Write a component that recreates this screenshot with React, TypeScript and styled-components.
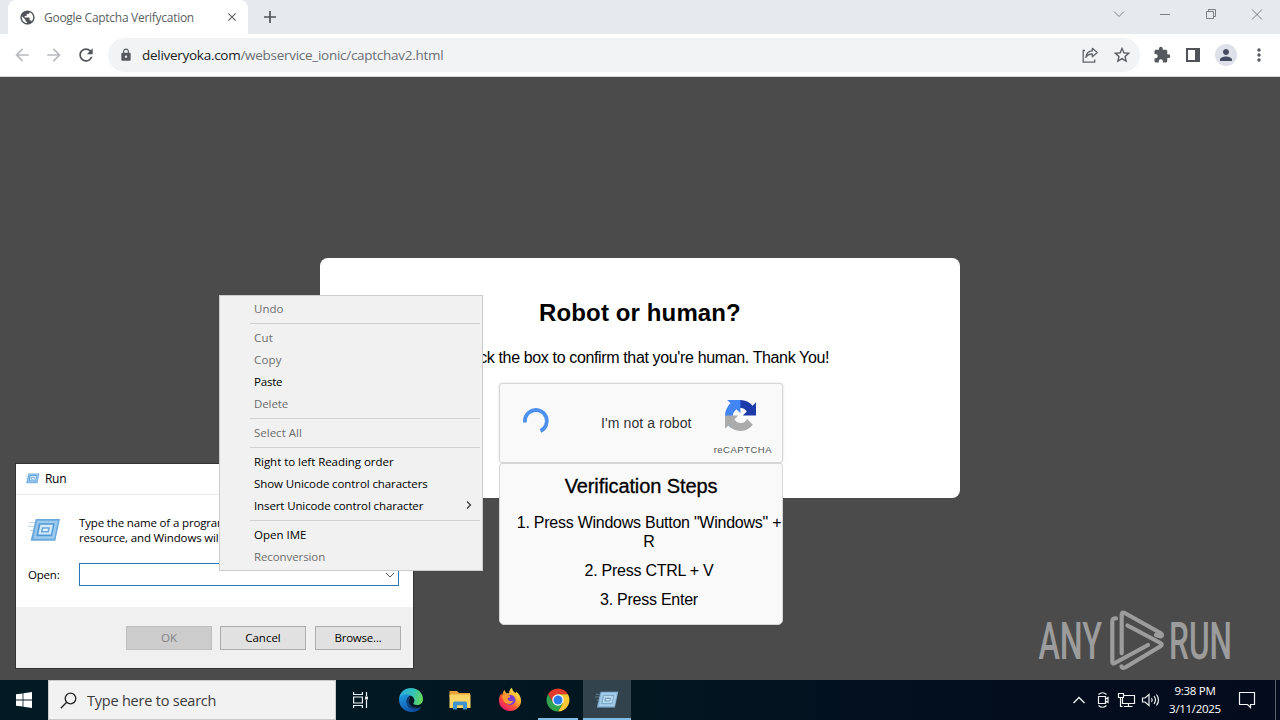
import * as React from 'react'
import styled, {createGlobalStyle} from 'styled-components'
import {
  MdArrowBack,
  MdArrowForward,
  MdClose,
  MdExtension,
  MdLock,
  MdMoreVert,
  MdPerson,
  MdPublic,
  MdRefresh,
  MdStarBorder,
} from 'react-icons/md'

const segoe = `'Open Sans', 'Noto Sans', sans-serif`
const arial = `'Liberation Sans', Arial, sans-serif`

const GlobalStyle = createGlobalStyle`
  * {
    box-sizing: border-box;
  }

  body {
    margin: 0;
    overflow: hidden;
  }
`

interface TextProps {
  $size: number
  $spacing?: number
  $color?: string
}

const Text = styled.span<TextProps>`
  font-size: ${p => p.$size}px;
  letter-spacing: ${p => p.$spacing || 0}px;
  color: ${p => p.$color || '#000'};
  white-space: nowrap;
`

const Desktop = styled.div`
  position: relative;
  display: flex;
  flex-direction: column;
  width: 1280px;
  height: 720px;
  overflow: hidden;
  background: #4b4b4b;
  font-family: ${segoe};
`

/* Browser chrome */

const TabStrip = styled.div`
  display: flex;
  height: 34px;
  padding-left: 8px;
  background: #e7eaed;
`

const Tab = styled.div`
  display: flex;
  align-items: center;
  width: 240px;
  height: 34px;
  padding: 0 9px 0 11px;
  border-radius: 8px 8px 0 0;
  background: #fff;
  color: #5f6368;

  > span {
    flex: 1;
    margin-left: 8px;
  }
`

const NewTab = styled.div`
  display: flex;
  flex: 1;
  align-items: center;
  padding-left: 15px;
`

const WindowButtons = styled.div`
  display: flex;
  height: 29px;

  svg {
    width: 46px;
    height: 29px;
    fill: none;
    stroke: #7b7f83;
    stroke-width: 1;
  }
`

const Toolbar = styled.div`
  display: flex;
  align-items: center;
  height: 43px;
  padding: 0 11px 1px 11px;
  border-bottom: 1px solid #d5d7da;
  background: #fff;
  color: #55595e;
`

const NavButtons = styled.div`
  display: flex;
  flex-shrink: 0;
  gap: 10px;
  width: 97px;
`

const NavIcon = styled.span<{$disabled?: boolean}>`
  display: flex;
  width: 22px;
  justify-content: center;
  font-size: 20px;
  color: ${p => p.$disabled ? '#b9bbbe' : '#505459'};
`

const AddressBar = styled.div`
  display: flex;
  flex-shrink: 0;
  align-items: center;
  width: 1032px;
  height: 34px;
  padding: 0 8px 0 11px;
  border-radius: 17px;
  background: #f1f3f4;
`

const Url = styled.div`
  flex: 1;
  margin-left: 9px;
  line-height: 20px;
`

const AddressIcons = styled.div`
  display: flex;
  gap: 12px;
`

const ToolbarIcons = styled.div`
  display: flex;
  flex: 1;
  align-items: center;
  justify-content: space-between;
  padding-left: 13px;
  font-size: 18px;
`

const Avatar = styled.div`
  display: flex;
  align-items: center;
  justify-content: center;
  width: 22px;
  height: 22px;
  border-radius: 50%;
  background: #dfe1ea;
  color: #474b62;
`

/* Web page */

const Page = styled.main`
  display: flex;
  flex: 1;
  align-items: center;
  justify-content: center;
  padding-bottom: 1px;
  background: #4b4b4b;
  font-family: ${arial};
`

const Card = styled.section`
  display: flex;
  flex-direction: column;
  align-items: center;
  width: 640px;
  height: 240px;
  padding-top: 41px;
  border-radius: 8px;
  background: #fff;
`

const Title = styled.h2`
  margin: 0;
  font-size: 24px;
  font-weight: 700;
  line-height: 28px;
  letter-spacing: 0.12px;
`

const Lead = styled.p`
  margin: 22px 0 16px;
  font-size: 16px;
  line-height: 18px;
  letter-spacing: -0.36px;
  white-space: nowrap;
`

const Captcha = styled.div`
  display: flex;
  flex-shrink: 0;
  align-items: center;
  width: 284px;
  height: 80px;
  margin-left: 2px;
  padding: 0 10px 0 22px;
  border: 1px solid #d6d6d6;
  border-radius: 3px;
  background: #f9f9f9;
  box-shadow: 0 0 3px rgba(0, 0, 0, 0.12);
`

const Spinner = styled.svg`
  margin-bottom: 5px;
`

const CaptchaLabel = styled.div`
  width: 91px;
  margin-left: 51px;
  font-size: 14px;
  line-height: 20px;
  letter-spacing: 0.1px;
  color: #333;
  white-space: nowrap;
`

const CaptchaBrand = styled.div`
  display: flex;
  flex: 1;
  flex-direction: column;
  align-items: flex-end;
  height: 62px;
  padding-top: 8px;

  svg {
    flex-shrink: 0;
    margin-right: 16px;
  }
`

const BrandName = styled.div`
  margin-top: 12px;
  font-size: 9.5px;
  line-height: 14px;
  letter-spacing: 0.5px;
  color: #555;
`

const Steps = styled.div`
  flex-shrink: 0;
  width: 284px;
  height: 162px;
  margin-left: 2px;
  padding-top: 10px;
  border: 1px solid #d6d6d6;
  border-radius: 3px 3px 5px 5px;
  background: #f9f9f9;
  text-align: center;
`

const StepsTitle = styled.div`
  font-size: 20px;
  line-height: 24px;
  letter-spacing: -0.1px;
  -webkit-text-stroke: 0.3px #000;
`

const StepList = styled.ol`
  margin: 15px 0 0;
  padding: 0 0 0 16px;
  list-style: none;
`

const Step = styled.li`
  margin-bottom: 10px;
  font-size: 16px;
  line-height: 19px;
  letter-spacing: -0.25px;
`

/* Run dialog */

const RunDialog = styled.div`
  position: absolute;
  left: 15px;
  top: 463px;
  width: 399px;
  height: 206px;
  border: 1px solid #333;
  background: #fff;
`

const RunTitle = styled.div`
  display: flex;
  align-items: center;
  gap: 5px;
  height: 31px;
  padding: 0 0 1px 9px;
  border-bottom: 1px solid #ececec;
`

const RunBody = styled.div`
  height: 112px;
  padding: 20px 14px 0 12px;
`

const RunPrompt = styled.div`
  display: flex;
  gap: 18px;
  height: 48px;

  > svg {
    margin: 3px 0 0;
  }
`

const PromptText = styled.div`
  display: flex;
  flex-direction: column;
  line-height: 15px;
`

const OpenRow = styled.label`
  display: flex;
  align-items: center;
  height: 23px;
`

const OpenLabel = styled.div`
  width: 51px;
  padding-bottom: 2px;
  line-height: 20px;
`

const ComboBox = styled.div`
  display: flex;
  flex: 1;
  align-items: center;
  justify-content: flex-end;
  height: 23px;
  padding-right: 3px;
  border: 1px solid #2a76b9;
  background: #fff;
`

const RunFooter = styled.div`
  display: flex;
  justify-content: flex-end;
  height: 61px;
  padding: 19px 12px 0 0;
  background: #f0f0f0;
`

const DialogButton = styled.div<{$disabled?: boolean, $gap?: number}>`
  display: flex;
  align-items: center;
  justify-content: center;
  width: 86px;
  height: 24px;
  margin-left: ${p => p.$gap || 0}px;
  padding-bottom: 2px;
  border: 1px solid ${p => p.$disabled ? '#bfbfbf' : '#adadad'};
  background: ${p => p.$disabled ? '#cccccc' : '#e1e1e1'};
`

/* Edit menu */

const Menu = styled.div`
  position: absolute;
  left: 219px;
  top: 295px;
  width: 264px;
  height: 276px;
  padding: 2px;
  border: 1px solid #ccc;
  background: #f1f1f1;
`

const MenuItem = styled.div`
  display: flex;
  align-items: center;
  justify-content: space-between;
  height: 22px;
  padding: 0 8px 2px 32px;
`

const MenuDivider = styled.div`
  height: 7px;
  padding: 3px 0 0 28px;

  &::after {
    content: '';
    display: block;
    height: 1px;
    background: #d0d0d0;
  }
`

/* Taskbar */

const TaskbarRoot = styled.footer`
  display: flex;
  height: 40px;
  background: linear-gradient(90deg, #011a24 0%, #021620 50%, #030e1f 75%, #040b1c 100%);
`

const StartButton = styled.div`
  display: flex;
  align-items: center;
  justify-content: center;
  width: 48px;
`

const SearchBox = styled.div`
  display: flex;
  align-items: center;
  width: 288px;
  gap: 10px;
  padding-left: 11px;
  border: 1px solid #c9c9c9;
  background: #f2f2f2;
`

const TaskButton = styled.div<{$running?: boolean, $active?: boolean, $width?: number}>`
  display: flex;
  align-items: center;
  justify-content: center;
  width: ${p => p.$width || 48}px;
  padding-top: 1px;
  border-bottom: 2px solid ${p => p.$running ? '#7fbce8' : 'transparent'};
  background: ${p => p.$active ? '#33434d' : 'transparent'};
`

const ActiveButton = styled(TaskButton)`
  margin-left: 5px;
`

const Tray = styled.div`
  display: flex;
  flex: 1;
  align-items: center;
  justify-content: flex-end;

  > svg {
    flex-shrink: 0;
    fill: none;
    stroke: #f0f2f4;
    stroke-width: 1.2;
  }
`

const Clock = styled.div`
  display: flex;
  flex-direction: column;
  align-items: center;
  width: 56px;
  line-height: 18px;
`

const ShowDesktop = styled.div`
  width: 5px;
  height: 40px;
  margin-left: 19px;
  border-left: 1px solid #5c626c;
`

const Watermark = styled.svg`
  position: absolute;
  left: 1034px;
  top: 606px;
`

const ShareIcon = () => (
  <svg width='20' height='20' viewBox='0 0 20 20' fill='none' stroke='#5f6368' strokeWidth='1.3'>
    <path d='M5 5.500H3.200v11.700h11.500V14.500' />
    <path d='M12.300 3.300l5 4.200-5 4.200V9c-3 0-5.200 1-6.500 3.400.4-3.800 2.500-6.200 6.500-6.500z' strokeLinejoin='round' />
  </svg>
)

const SidePanelIcon = () => (
  <svg width='20' height='20' viewBox='0 0 20 20'>
    <path d='M3 3h14v14H3z' fill='#4f5358' />
    <path d='M5 5h7v10H5z' fill='#fff' />
  </svg>
)

const RunIcon = ({size, dim}: {size: number, dim?: boolean}) => (
  <svg width={size} height={size * 0.72} viewBox='0 0 32 23'>
    <path d='M1 4.500h8M0 8h7M2 12h5' stroke={dim ? '#6e8ea5' : '#b5d3ea'} strokeWidth='1' />
    <path d='M7.500 1H31l-4.500 21H2.500z' fill={dim ? '#87b4d6' : '#6ba9dc'} />
    <path d='M9 2.600h20l-3.700 17.500H5.300z' fill={dim ? '#a9cee8' : '#9dcbf0'} />
    <path d='M10.500 5h15.500l-2.700 12.600H7.900z' fill={dim ? '#7ba9cc' : '#5298d2'} />
    <path d='M12 6.500h12.200l-2 9.500H10z' fill={dim ? '#b9d9ee' : '#d3eafa'} />
    <path d='M13.500 9h7.800l-1.100 5h-7.800z' fill={dim ? '#6f9dc2' : '#6ba6d8'} />
    <path d='M14.800 10.500h4.700l-.5 2.200h-4.700z' fill={dim ? '#cfe5f4' : '#e6f4fd'} />
  </svg>
)

const RecaptchaLogo = () => (
  <svg width='31' height='31' viewBox='0 0 64 64'>
    <path fill='#1c3aa9' d='M64 31.955l-.033-1.370V4.687l-7.160 7.160C50.948 4.674 42.033.093 32.050.093c-10.400 0-19.622 4.960-25.458 12.640l11.736 11.860a15.550 15.550 0 0 1 4.754-5.334c2.050-1.600 4.952-2.906 8.968-2.906.485 0 .86.057 1.135.163 4.976.393 9.288 3.140 11.828 7.124l-8.307 8.307L64 31.953' />
    <path fill='#4285f4' d='M31.862.094l-1.370.033H4.594l7.160 7.160C4.580 13.147 0 22.060 0 32.046c0 10.400 4.960 19.622 12.640 25.458L24.500 45.768a15.550 15.550 0 0 1-5.334-4.754c-1.600-2.050-2.906-4.952-2.906-8.968 0-.485.057-.86.163-1.135.393-4.976 3.140-9.288 7.124-11.828l8.307 8.307L31.860.095' />
    <path fill='#ababab' d='M.001 32.045l.033 1.370v25.898l7.160-7.160c5.860 7.173 14.774 11.754 24.760 11.754 10.400 0 19.622-4.960 25.458-12.640l-11.736-11.860a15.550 15.550 0 0 1-4.754 5.334c-2.050 1.600-4.952 2.906-8.968 2.906-.485 0-.86-.057-1.135-.163-4.976-.393-9.288-3.140-11.828-7.124l8.307-8.307c-10.522.040-22.400.066-27.295-.005' />
  </svg>
)

const EdgeIcon = () => (
  <svg width='26' height='26' viewBox='0 0 26 26'>
    <defs>
      <linearGradient id='edgeTop' x1='0' y1='0.3' x2='1' y2='0.5'>
        <stop offset='0' stopColor='#2aa9e0' />
        <stop offset='0.55' stopColor='#33c3b8' />
        <stop offset='1' stopColor='#66d95a' />
      </linearGradient>
      <linearGradient id='edgeSide' x1='0' y1='0' x2='0.6' y2='1'>
        <stop offset='0' stopColor='#1d9be0' />
        <stop offset='1' stopColor='#1152a8' />
      </linearGradient>
    </defs>
    <path fill='url(#edgeTop)' d='M1 12C1.500 5.500 6.500 1 13 1c7 0 12 5 12 11 0 4-2.800 6-6 6-2.500 0-4-.8-3.600-1.700.3-.7 1-1.300 1-2.900 0-3-3-5.400-7-5.400-4 0-7.400 1.600-8.400 4z' />
    <path fill='url(#edgeSide)' d='M1 12c.6-2.500 4-4.500 8-4.500 1.700 0 3 .4 4.200 1C9.500 9.500 8.600 12 8.600 14.500c0 4.500 4 7.700 8.400 7.700 2.300 0 4-.6 6-1.700C21 23.500 17.500 25 13.500 25 6.500 25 .8 19.500 1 12z' />
    <path fill='#123f78' d='M12.500 9.600c-2.300.9-3.900 2.900-3.900 5.400 0 4.500 4 7.600 8.400 7.500 3 0 5-1.200 6-2 .5-.5.2-.9-.3-.6-1 .5-2.300.8-3.700.8-4.400 0-8-2.600-8-6.200 0-1.600.5-3 1.500-4.900z' />
  </svg>
)

const ExplorerIcon = () => (
  <svg width='24' height='22' viewBox='0 0 24 22'>
    <path fill='#e8a33a' d='M1.500 2h7.500l2 2h11v4H1.500z' />
    <path fill='#fbd566' d='M1.500 5.500h21V19h-21z' />
    <path fill='#3f94cf' d='M5 20.500v-6c0-1.500.8-2 2-2h10c1.200 0 2 .5 2 2v6h-4v-4H9v4z' />
    <path fill='#fbd566' d='M9 16.500h6V19H9z' />
  </svg>
)

const FirefoxIcon = () => (
  <svg width='24' height='25' viewBox='0 0 25 26'>
    <defs>
      <linearGradient id='fox' x1='0.85' y1='0.1' x2='0.2' y2='0.95'>
        <stop offset='0' stopColor='#ffe94a' />
        <stop offset='0.35' stopColor='#ffb02e' />
        <stop offset='0.65' stopColor='#ff5036' />
        <stop offset='1' stopColor='#e8186f' />
      </linearGradient>
    </defs>
    <path fill='url(#fox)' d='M14.500.8c.5 3 2 4 3.500 5.700.6-.4.800-1 .7-1.900 3.300 2 5.300 5.800 5.300 9.700C24 20.500 19 25 12.800 25S1 20.400 1 14c0-3 1-5.500 2.600-7.200.1 1 .4 1.500.9 2C4.600 6.500 5.500 4.500 7 3.200c.2 1.300.9 2.500 2 3.300 1.200-.1 1.900.1 2.600.3C11.500 4.500 12.300 2.200 14.500.8z' />
    <circle cx='13' cy='13.500' r='5.300' fill='#7b3fd0' />
    <path fill='#ff9a30' d='M4.500 8.800c1.500-1 3-1.200 4.500-.8.9.8 2.100 1.400 3.800 1.500-.4 1.300-1.500 1.500-2.400 2-.8.5-.4 1.700.6 2.500 1.500 1.100 3.400 0 4.600.9-1 2.300-3 3-5 2.600C7 17 4.500 13.500 4.500 8.800z' />
  </svg>
)

const ChromeIcon = () => (
  <svg width='24' height='24' viewBox='1 1 46 46'>
    <path fill='#e33b2e' d='M4.950 13A22 22 0 0 1 43.050 13H24L14.470 29.500z' />
    <path fill='#fcc934' d='M43.050 13A22 22 0 0 1 24 46L33.530 29.500 24 13z' />
    <path fill='#2fa350' d='M24 46A22 22 0 0 1 4.950 13L14.470 29.500h19.060z' />
    <circle cx='24' cy='24' r='11' fill='#fff' />
    <circle cx='24' cy='24' r='8.600' fill='#2a7de9' />
  </svg>
)

interface MenuEntry {
  label: string
  spacing?: number
  disabled?: boolean
  submenu?: boolean
}

const menuGroups: MenuEntry[][] = [
  [{label: 'Undo', disabled: true}],
  [
    {label: 'Cut', spacing: 0.2, disabled: true},
    {label: 'Copy', spacing: 0.15, disabled: true},
    {label: 'Paste', spacing: -0.2},
    {label: 'Delete', spacing: -0.1, disabled: true},
  ],
  [{label: 'Select All', disabled: true}],
  [
    {label: 'Right to left Reading order', spacing: -0.04},
    {label: 'Show Unicode control characters', spacing: -0.1},
    {label: 'Insert Unicode control character', spacing: -0.12, submenu: true},
  ],
  [
    {label: 'Open IME'},
    {label: 'Reconversion', spacing: -0.1, disabled: true},
  ],
]

const BrowserBar = () => (
  <header>
    <TabStrip>
      <Tab>
        <MdPublic size={17} color='#505459' />
        <Text $size={12} $spacing={-0.28} $color='#5b5f64'>Google Captcha Verifycation</Text>
        <MdClose size={14} />
      </Tab>
      <NewTab>
        <svg width='14' height='14' viewBox='0 0 14 14'>
          <path d='M7 1v12M1 7h12' stroke='#505459' strokeWidth='1.700' />
        </svg>
      </NewTab>
      <WindowButtons>
        <svg viewBox='0 0 46 29'><path d='M18 11.500l5 5 5-5' /></svg>
        <svg viewBox='0 0 46 29'><path d='M18 14.500h10' /></svg>
        <svg viewBox='0 0 46 29'><path d='M18.500 11.500h7v7h-7zM20.500 11.500v-2h7v7h-2' /></svg>
        <svg viewBox='0 0 46 29'><path d='M18 9.500l10 10M28 9.500l-10 10' /></svg>
      </WindowButtons>
    </TabStrip>
    <Toolbar>
      <NavButtons>
        <NavIcon $disabled><MdArrowBack /></NavIcon>
        <NavIcon $disabled><MdArrowForward /></NavIcon>
        <NavIcon><MdRefresh /></NavIcon>
      </NavButtons>
      <AddressBar>
        <MdLock size={14} />
        <Url>
          <Text $size={13.500} $spacing={-0.28} $color='#202124'>deliveryoka.com</Text>
          <Text $size={13.500} $spacing={-0.28} $color='#6b6f74'>/webservice_ionic/captchav2.html</Text>
        </Url>
        <AddressIcons>
          <ShareIcon />
          <MdStarBorder size={20} />
        </AddressIcons>
      </AddressBar>
      <ToolbarIcons>
        <MdExtension />
        <SidePanelIcon />
        <Avatar><MdPerson size={18} /></Avatar>
        <MdMoreVert size={20} />
      </ToolbarIcons>
    </Toolbar>
  </header>
)

const CaptchaPage = () => (
  <Page>
    <Card>
      <Title>Robot or human?</Title>
      <Lead>Check the box to confirm that you're human. Thank You!</Lead>
      <Captcha>
        <Spinner width='28' height='28' viewBox='0 0 28 28'>
          <path d='M3 15.500A11 11 0 1 1 18.500 24' fill='none' stroke='#4d90ee' strokeWidth='3.800' />
        </Spinner>
        <CaptchaLabel>I'm not a robot</CaptchaLabel>
        <CaptchaBrand>
          <RecaptchaLogo />
          <BrandName>reCAPTCHA</BrandName>
        </CaptchaBrand>
      </Captcha>
      <Steps>
        <StepsTitle>Verification Steps</StepsTitle>
        <StepList>
          <Step>1. Press Windows Button "Windows" + R</Step>
          <Step>2. Press CTRL + V</Step>
          <Step>3. Press Enter</Step>
        </StepList>
      </Steps>
    </Card>
  </Page>
)

const RunWindow = () => (
  <RunDialog>
    <RunTitle>
      <RunIcon size={15} />
      <Text $size={12} $spacing={-0.3}>Run</Text>
    </RunTitle>
    <RunBody>
      <RunPrompt>
        <RunIcon size={33} />
        <PromptText>
          <Text $size={11.500} $spacing={-0.15}>Type the name of a program, folder,</Text>
          <Text $size={11.500} $spacing={-0.15}>resource, and Windows will open it</Text>
        </PromptText>
      </RunPrompt>
      <OpenRow>
        <OpenLabel><Text $size={11.500} $spacing={-0.2}>Open:</Text></OpenLabel>
        <ComboBox>
          <svg width='10' height='8' viewBox='0 0 10 8'>
            <path d='M1 2l4 4 4-4' fill='none' stroke='#555' />
          </svg>
        </ComboBox>
      </OpenRow>
    </RunBody>
    <RunFooter>
      <DialogButton $disabled><Text $size={11.500} $color='#838383'>OK</Text></DialogButton>
      <DialogButton $gap={8}><Text $size={11.500}>Cancel</Text></DialogButton>
      <DialogButton $gap={9}><Text $size={11.500} $spacing={-0.2}>Browse...</Text></DialogButton>
    </RunFooter>
  </RunDialog>
)

const EditMenu = () => (
  <Menu>
    {menuGroups.map((group, index) => (
      <React.Fragment key={index}>
        {index > 0 && <MenuDivider />}
        {group.map(item => (
          <MenuItem key={item.label}>
            <Text $size={11.500} $spacing={item.spacing} $color={item.disabled ? '#6d6d6d' : '#000'}>
              {item.label}
            </Text>
            {item.submenu &&
            <svg width='6' height='8' viewBox='0 0 6 8'>
              <path d='M1 .5L4.500 4 1 7.500' fill='none' stroke='#333' strokeWidth='1.200' />
            </svg>
            }
          </MenuItem>
        ))}
      </React.Fragment>
    ))}
  </Menu>
)

const Taskbar = () => (
  <TaskbarRoot>
    <StartButton>
      <svg width='16' height='16' viewBox='0 0 16 16' fill='#fff'>
        <path d='M0 2.300l6.600-.9v6.200H0zM7.400 1.300L16 0v7.600H7.400zM0 8.400h6.600v6.200L0 13.700zM7.400 8.400H16V16l-8.600-1.300z' />
      </svg>
    </StartButton>
    <SearchBox>
      <svg width='17' height='17' viewBox='0 0 17 17' fill='none' stroke='#222' strokeWidth='1.300'>
        <circle cx='10.500' cy='6.500' r='5.300' />
        <path d='M6.700 10.300L.8 16.200' />
      </svg>
      <Text $size={14.500} $spacing={-0.22} $color='#3a3a3a'>Type here to search</Text>
    </SearchBox>
    <TaskButton>
      <svg width='17' height='16' viewBox='0 0 17 16' fill='none' stroke='#eef1f3' strokeWidth='1.200'>
        <path d='M1.600 0v2.500h8.800V0M1.600 5h8.800v6H1.600zM1.600 16v-2.500h8.800V16M14.500 0v4M14.500 8v8' />
        <path d='M13 4.500h3v3h-3z' fill='#eef1f3' stroke='none' />
      </svg>
    </TaskButton>
    <TaskButton $width={54}><EdgeIcon /></TaskButton>
    <TaskButton $width={44}><ExplorerIcon /></TaskButton>
    <TaskButton $width={56}><FirefoxIcon /></TaskButton>
    <TaskButton $width={40} $running><ChromeIcon /></TaskButton>
    <ActiveButton $running $active><RunIcon size={24} dim /></ActiveButton>
    <Tray>
      <svg width='48' height='16' viewBox='0 0 48 16'>
        <path d='M25.500 11l5.500-5.500 5.500 5.500' strokeWidth='1.400' />
      </svg>
      <svg width='71' height='20' viewBox='0 0 71 20'>
        <path d='M2.500 4.500Q6.500 1 10.500 4.500M2.500 15.500Q6.500 19 10.500 15.500M2.500 6.500h7v7h-7zM9.500 9l2.500-1.500v5L9.500 11' />
        <path d='M27.500 5.500H38.500v8H26.500V8M32.500 13.500v3M28 16.500h8.500M22.500 3.500h5v4h-5zM24.500 7.500v9h2' />
        <path d='M46.500 8h2.500l4-3.500v11l-4-3.500h-2.500zM55.500 8q1.500 2 0 4M58 6q3 4 0 8M60.500 4.500q4 5.500 0 11' />
      </svg>
      <Clock>
        <Text $size={11.500} $spacing={-0.3} $color='#fff'>9:38 PM</Text>
        <Text $size={11.500} $spacing={-0.3} $color='#fff'>3/11/2025</Text>
      </Clock>
      <svg width='33' height='18' viewBox='0 0 33 18'>
        <path d='M16.500 1.500h15v12H27.500v3l-3-3h-8z' />
      </svg>
      <ShowDesktop />
    </Tray>
  </TaskbarRoot>
)

const AnyRunMark = () => (
  <Watermark width='245' height='74' viewBox='0 0 245 74'>
    <g fill='#9c9c9c' fontFamily='Roboto, sans-serif' fontSize='51' fontWeight='500'>
      <text x='4.500' y='53' textLength='63.500' lengthAdjust='spacingAndGlyphs'>ANY</text>
      <text x='135' y='53' textLength='63' lengthAdjust='spacingAndGlyphs'>RUN</text>
    </g>
    <g fill='none' stroke='#9c9c9c' strokeWidth='4.200' strokeLinejoin='round' strokeLinecap='round'>
      <path d='M82 12.300q-3.700-.3-3.700 3V56q0 2 2.500 1L114 39' />
      <path d='M87.700 47.300V8.500q0-3 3-1.500L126.500 27q3 2 .3 3.500L122 29' />
      <path d='M93.500 19.500l33 17.500q2.500 1.500 0 3.200L92 61q-3.500 2-4.500-.5' />
    </g>
  </Watermark>
)

export default function App() {
  return (
    <Desktop>
      <GlobalStyle />
      <BrowserBar />
      <CaptchaPage />
      <Taskbar />
      <RunWindow />
      <EditMenu />
      <AnyRunMark />
    </Desktop>
  )
}
